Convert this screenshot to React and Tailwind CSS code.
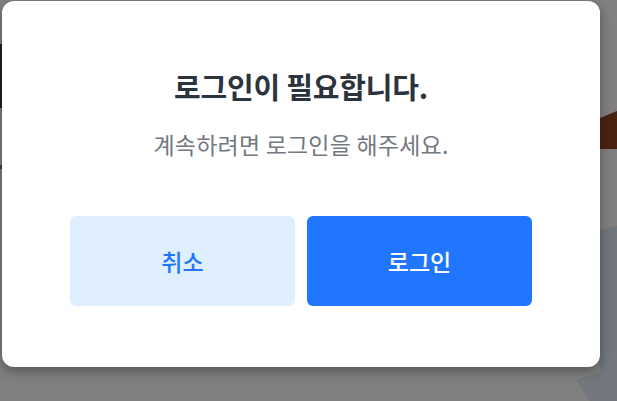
export default function App() {
  return (
    <div
      className="relative w-[617px] h-[401px] overflow-hidden bg-[#808080]"
      style={{ fontFamily: '"Noto Sans CJK KR", "Noto Sans", sans-serif' }}
    >
      <svg className="absolute inset-0" width="617" height="401" viewBox="0 0 617 401">
        <rect x="0" y="44" width="3" height="64" fill="#1b2027" />
        <rect x="0" y="165" width="3" height="4" fill="#3a3f46" />
        <polygon points="600,118 617,111 617,149 600,149" fill="#4a2212" />
        <polygon points="590,232 617,226 617,401 590,401 576,380 600,372 596,300" fill="#72777d" />
      </svg>
      <div className="relative flex pt-[1px] pl-[2px]">
        <div className="w-[598px] h-[366px] rounded-xl bg-white shadow-[0_4px_12px_rgba(0,0,0,0.35)] flex flex-col items-center pt-[67px]">
          <h1 className="text-[29px] leading-[36px] font-bold text-[#2b333d] tracking-[-0.2px]">
            로그인이 필요합니다.
          </h1>
          <p className="mt-[26px] text-[23px] leading-[28px] text-[#737880] tracking-[0.2px]">
            계속하려면 로그인을 해주세요.
          </p>
          <div className="mt-[58px] flex gap-[12px]">
            <button className="w-[225px] h-[90px] rounded-md bg-[#e0effe] text-[#2176ff] text-[23px] font-medium">
              취소
            </button>
            <button className="w-[225px] h-[90px] rounded-md bg-[#2176ff] text-white text-[23px] font-medium">
              로그인
            </button>
          </div>
        </div>
      </div>
    </div>
  );
}
